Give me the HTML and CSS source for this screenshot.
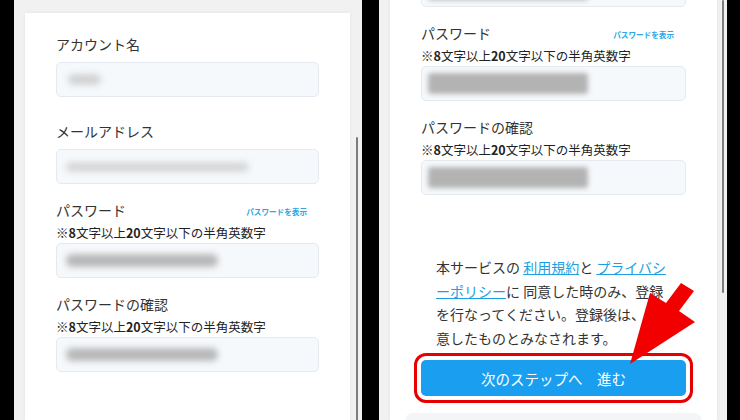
FILE: index.html
```html
<!DOCTYPE html>
<html lang="ja">
<head>
    <meta charset="UTF-8">
    <meta name="viewport" content="width=device-width, initial-scale=1.0">
    <title>アカウント登録</title>
    <link rel="stylesheet" href="styles.css">
</head>
<body>
<div class="screens">
    <!-- Left screen -->
    <section class="phone phone-left">
        <div class="card card-left">
            <div class="field">
                <div class="field-head"><span class="label">アカウント名</span></div>
                <div class="field-input"><span class="blur blur-name"></span></div>
            </div>
            <div class="field field-mail">
                <div class="field-head"><span class="label">メールアドレス</span></div>
                <div class="field-input"><span class="blur blur-mail"></span></div>
            </div>
            <div class="field">
                <div class="field-head">
                    <span class="label">パスワード</span>
                    <a href="#" class="show-pass">パスワードを表示</a>
                </div>
                <p class="note">※<b>8</b>文字以上<b>20</b>文字以下の半角英数字</p>
                <div class="field-input"><span class="blur blur-pass"></span></div>
            </div>
            <div class="field">
                <div class="field-head"><span class="label">パスワードの確認</span></div>
                <p class="note">※<b>8</b>文字以上<b>20</b>文字以下の半角英数字</p>
                <div class="field-input"><span class="blur blur-pass"></span></div>
            </div>
        </div>
        <div class="gutter gutter-left"><div class="thumb thumb-left"></div></div>
    </section>

    <!-- Right screen (scrolled down) -->
    <section class="phone phone-right">
        <div class="card card-right">
            <div class="field-input field-first"><span class="blur blur-right"></span></div>
            <div class="field">
                <div class="field-head">
                    <span class="label">パスワード</span>
                    <a href="#" class="show-pass">パスワードを表示</a>
                </div>
                <p class="note">※<b>8</b>文字以上<b>20</b>文字以下の半角英数字</p>
                <div class="field-input"><span class="blur blur-right"></span></div>
            </div>
            <div class="field">
                <div class="field-head"><span class="label">パスワードの確認</span></div>
                <p class="note">※<b>8</b>文字以上<b>20</b>文字以下の半角英数字</p>
                <div class="field-input"><span class="blur blur-right"></span></div>
            </div>

            <p class="terms">本サービスの <a href="#">利用規約</a>と <a href="#">プライバシーポリシー</a>に 同意した時のみ、登録を行なってください。登録後は、同意したものとみなされます。</p>

            <button class="next-btn">次のステップへ　進む</button>
            <div class="next-box"></div>
        </div>
        <div class="gutter gutter-right"><div class="thumb thumb-right"></div></div>
    </section>
</div>

<!-- annotation arrow -->
<svg class="arrow" viewBox="620 275 80 95" width="80" height="95">
    <polygon points="630,364 650,293 666,303 681,283 694,291 679,311 695,322" fill="#f20000"/>
</svg>
</body>
</html>
```

FILE: styles.css
```css
* {
    box-sizing: border-box;
}

body {
    margin: 0;
    width: 740px;
    height: 420px;
    overflow: hidden;
    background: #000;
    font-family: "Noto Sans CJK JP", "Noto Sans", sans-serif;
    color: #333;
    position: relative;
}

.screens {
    display: flex;
    gap: 17px;
    padding-left: 14px;
    height: 420px;
}

.phone {
    width: 348px;
    height: 420px;
    background: #f1f1f1;
    display: flex;
    overflow: hidden;
    padding-left: 11px;
}

.phone-left {
    padding-top: 13px;
}

.card {
    background: #fff;
    flex: 1;
    padding: 0 31px;
    box-shadow: 0 0 4px rgba(0, 0, 0, 0.06);
}

.card-left {
    padding-top: 21px;
}

.card-right {
    margin-top: -28px;
}

.gutter {
    width: 12px;
}

.gutter-right {
    width: 10px;
}

.thumb {
    width: 2px;
    background: #7d7d7d;
    border-radius: 1px;
}

.thumb-left {
    margin: 124px 0 0 6px;
    height: 300px;
}

.thumb-right {
    margin: 0 0 0 5px;
    height: 293px;
}

/* Form fields */
.field {
    margin-top: 16px;
}

.field:first-child {
    margin-top: 0;
}

.field-mail {
    margin-top: 24px;
}

.field-head {
    display: flex;
    align-items: center;
    justify-content: space-between;
    height: 20px;
    padding-right: 12px;
}

.label {
    font-size: 14px;
    line-height: 20px;
}

.show-pass {
    font-size: 7.6px;
    font-weight: 700;
    color: #2ba6e6;
    text-decoration: none;
    margin-top: 3px;
}

.note {
    margin: 3px 0 0;
    font-size: 12.5px;
    line-height: 20px;
    color: #222;
}

.note b {
    font-weight: 700;
}

.field-input {
    height: 35px;
    margin-top: 8px;
    background: #f6f9fc;
    border: 1px solid #e4eaef;
    border-radius: 5px;
    display: flex;
    align-items: center;
    padding-left: 9px;
}

.note + .field-input {
    margin-top: 0;
}

.field-first {
    margin-top: 0;
}

.blur {
    display: block;
    border-radius: 6px;
    filter: blur(3px);
}

.blur-name {
    width: 33px;
    height: 11px;
    margin-left: 2px;
    background: #d2d2d2;
}

.blur-mail {
    width: 183px;
    height: 10px;
    background: #d6d6d6;
}

.blur-pass {
    width: 152px;
    height: 13px;
    background: #b8b8b8;
}

.card-right .field-input {
    padding-left: 6px;
}

.blur-right {
    width: 160px;
    height: 21px;
    border-radius: 3px;
    background: #b3b3b3;
    filter: blur(2.5px);
}

/* Terms + button */
.terms {
    margin: 61px 0 0;
    padding: 0 14px 0 15px;
    font-size: 14px;
    line-height: 23.5px;
    line-break: loose;
}

.terms a {
    color: #1c9fe3;
    text-decoration: underline;
}

.next-btn {
    display: block;
    width: 100%;
    height: 36px;
    margin-top: 10px;
    border: none;
    border-radius: 5px;
    background: #1a9ff0;
    color: #fff;
    font-family: inherit;
    font-size: 14.5px;
    outline: 3px solid #e80000;
    outline-offset: 4px;
}

.next-box {
    height: 40px;
    margin: 17px -16px 0;
    background: #f3f5f7;
    border-radius: 8px;
}

.arrow {
    position: absolute;
    left: 620px;
    top: 275px;
}
```
